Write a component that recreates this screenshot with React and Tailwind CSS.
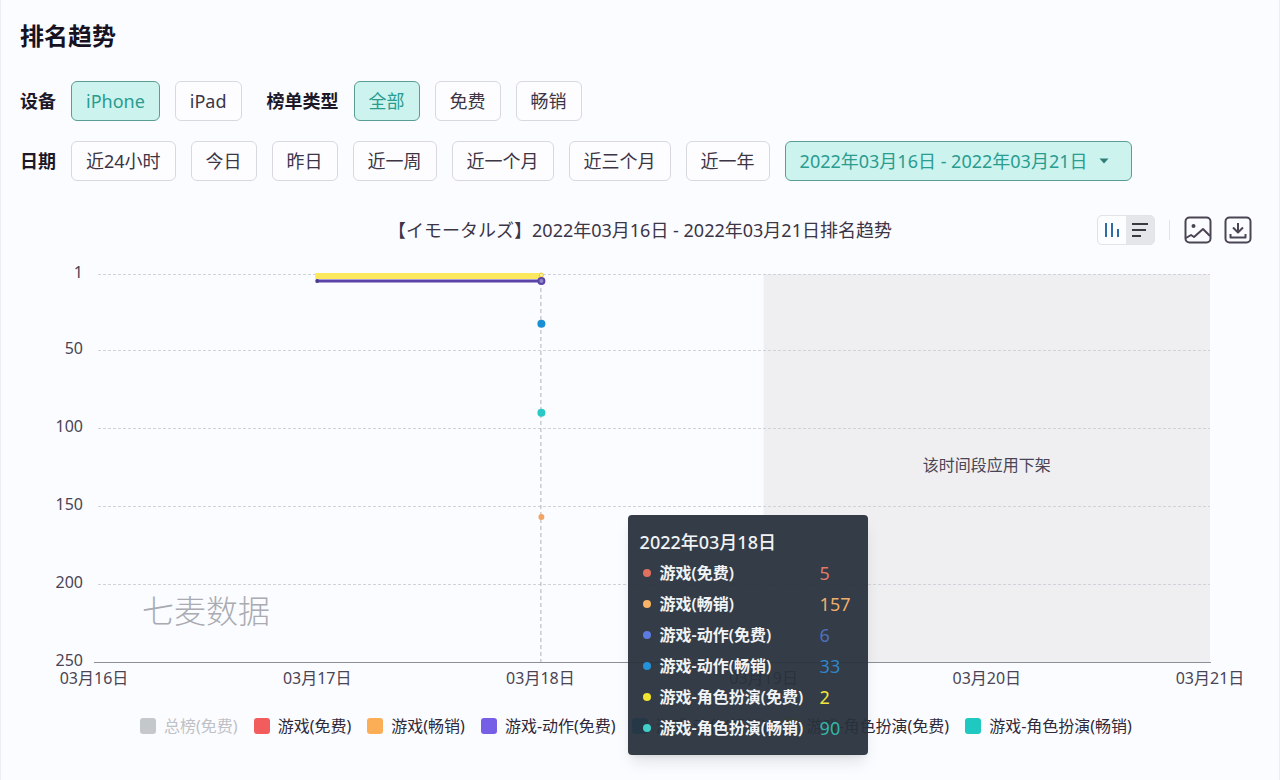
import React, { useState } from 'react';
import clsx from 'clsx';

const devices = ['iPhone', 'iPad'];
const rankTypes = ['全部', '免费', '畅销'];
const ranges = ['近24小时', '今日', '昨日', '近一周', '近一个月', '近三个月', '近一年'];
const dateRange = '2022年03月16日 - 2022年03月21日';

const legend = [
  { name: '总榜(免费)', color: 'bg-[#c4c8cb]', off: true },
  { name: '游戏(免费)', color: 'bg-[#f25c5c]' },
  { name: '游戏(畅销)', color: 'bg-[#fcae57]' },
  { name: '游戏-动作(免费)', color: 'bg-[#775ee6]' },
  { name: '游戏-动作(畅销)', color: 'bg-[#1890e0]' },
  { name: '游戏-角色扮演(免费)', color: 'bg-[#f7e34f]' },
  { name: '游戏-角色扮演(畅销)', color: 'bg-[#1fc9c1]' },
];

const tooltipRows = [
  { name: '游戏(免费)', value: 5, dot: 'bg-[#e0705f]', text: 'text-[#e07a6a]' },
  { name: '游戏(畅销)', value: 157, dot: 'bg-[#f9b266]', text: 'text-[#f0ae6c]' },
  { name: '游戏-动作(免费)', value: 6, dot: 'bg-[#5b7be0]', text: 'text-[#4f70bd]' },
  { name: '游戏-动作(畅销)', value: 33, dot: 'bg-[#2492d8]', text: 'text-[#2f86cb]' },
  { name: '游戏-角色扮演(免费)', value: 2, dot: 'bg-[#f2e32f]', text: 'text-[#f2e63c]' },
  { name: '游戏-角色扮演(畅销)', value: 90, dot: 'bg-[#3fd0c8]', text: 'text-[#35b5a8]' },
];

const yTicks = [1, 50, 100, 150, 200, 250];
const xTicks = ['03月16日', '03月17日', '03月18日', '03月19日', '03月20日', '03月21日'];

// plot area inside the 1240 x 430 chart
const LEFT = 74;
const RIGHT = 1190;
const TOP = 12;
const BOTTOM = 400;

const yOf = (rank) => TOP + ((rank - 1) / 249) * (BOTTOM - TOP);
const xOf = (day) => LEFT + (day / 5) * (RIGHT - LEFT);

function FilterButton({ active, onClick, children }) {
  return (
    <button
      type="button"
      aria-pressed={active}
      onClick={onClick}
      className={clsx(
        'h-10 px-[14px] rounded-md border flex items-center whitespace-nowrap',
        active ? 'bg-[#ccf3ee] border-[#5a9d97] text-[#2a9c90]' : 'bg-[#fdfdff] border-[#d8d9e0] text-[#3c3546]'
      )}
    >
      {children}
    </button>
  );
}

function Chart() {
  return (
    <svg viewBox="0 0 1240 430" className="block w-full" role="img" aria-label="排名趋势">
      <rect x={xOf(3)} y={TOP} width={RIGHT - xOf(3)} height={BOTTOM - TOP} fill="#efeff1" />

      {yTicks.map((t) => (
        <g key={t}>
          {t !== 250 && (
            <line
              x1={LEFT + 4}
              x2={RIGHT}
              y1={Math.round(yOf(t)) + 0.5}
              y2={Math.round(yOf(t)) + 0.5}
              stroke="#d0d2d9"
              strokeDasharray="3 2"
            />
          )}
          <text x="63" y={yOf(t) + 4} textAnchor="end" fontSize="16" fill="#4a4454">
            {t}
          </text>
        </g>
      ))}
      <line x1={LEFT} x2={RIGHT + 1} y1={BOTTOM + 0.5} y2={BOTTOM + 0.5} stroke="#8d9098" />

      {xTicks.map((label, i) => (
        <text key={label} x={xOf(i)} y="422" textAnchor="middle" fontSize="16" fill="#4a4454">
          {label}
        </text>
      ))}

      <text x="122" y="361" fontSize="32" fontWeight="300" fill="#a9abb1">
        七麦数据
      </text>
      <text x={(xOf(3) + RIGHT) / 2} y="209" textAnchor="middle" fontSize="16" fill="#4a4454">
        该时间段应用下架
      </text>

      {/* series */}
      <line x1={xOf(2) + 0.5} x2={xOf(2) + 0.5} y1={TOP} y2={BOTTOM} stroke="#b3b0b8" strokeDasharray="4 3" />
      <line x1={xOf(1) - 2} x2={xOf(2) + 2} y1="14" y2="14" stroke="#fbe85c" strokeWidth="6" />
      <line x1={xOf(1) - 1} x2={xOf(2)} y1="19" y2="19" stroke="#5b43a8" strokeWidth="3" />
      <circle cx={xOf(1)} cy="19" r="2" fill="#4b3a94" />
      <circle cx={xOf(2) + 1} cy="13" r="2" fill="#fdf3a0" stroke="#e8c93a" />
      <circle cx={xOf(2) + 1} cy="19" r="3" fill="#9186c8" stroke="#5b43a8" strokeWidth="2" />
      <circle cx={xOf(2) + 1} cy={yOf(33)} r="4" fill="#1a8fd2" />
      <circle cx={xOf(2) + 1} cy={yOf(90)} r="4" fill="#2cc8c6" />
      <circle cx={xOf(2) + 1} cy={yOf(157)} r="3" fill="#f2a563" />
    </svg>
  );
}

function Tooltip() {
  return (
    <div className="absolute left-[49%] top-[253px] w-60 rounded bg-[#27313b]/94 px-3 pt-3 pb-3 shadow-lg text-[#f1f3f6]">
      <div className="h-[30px] flex items-center text-lg font-medium">2022年03月18日</div>
      <table className="w-full">
        <tbody>
          {tooltipRows.map((row) => (
            <tr key={row.name} className="h-[31px]">
              <td className="w-5 p-0">
                <span className={clsx('block w-2 h-2 ml-[3px] rounded-full', row.dot)}></span>
              </td>
              <td className="p-0 text-base leading-6 font-semibold whitespace-nowrap">{row.name}</td>
              <td className={clsx('w-9 p-0 text-lg leading-6', row.text)}>{row.value}</td>
            </tr>
          ))}
        </tbody>
      </table>
    </div>
  );
}

export default function App() {
  const [device, setDevice] = useState('iPhone');
  const [rankType, setRankType] = useState('全部');
  const [range, setRange] = useState(dateRange);

  return (
    <div className="min-h-screen bg-[#fbfcff] border-x border-[#eceef4] px-[19px] pt-5 pb-5 font-['Noto_Sans','Noto_Sans_CJK_SC',sans-serif] text-lg text-[#3c3546]">
      <h2 className="text-2xl font-bold text-[#16121f]">排名趋势</h2>

      <div className="mt-[29px] flex flex-wrap items-center gap-[15px]">
        <span className="font-bold text-[#1d1828]">设备</span>
        {devices.map((d) => (
          <FilterButton key={d} active={device === d} onClick={() => setDevice(d)}>
            {d}
          </FilterButton>
        ))}
        <span className="ml-[10px] font-bold text-[#1d1828]">榜单类型</span>
        {rankTypes.map((t) => (
          <FilterButton key={t} active={rankType === t} onClick={() => setRankType(t)}>
            {t}
          </FilterButton>
        ))}
      </div>

      <div className="mt-5 flex flex-wrap items-center gap-[15px]">
        <span className="font-bold text-[#1d1828]">日期</span>
        {ranges.map((r) => (
          <FilterButton key={r} active={range === r} onClick={() => setRange(r)}>
            {r}
          </FilterButton>
        ))}
        <FilterButton active={range === dateRange} onClick={() => setRange(dateRange)}>
          <span>{dateRange}</span>
          <svg viewBox="0 0 10 6" className="w-[10px] h-[6px] ml-3 mr-2" fill="#2f7f78">
            <path d="M0.5 0.5h9L5 5.5z" />
          </svg>
        </FilterButton>
      </div>

      <div className="mt-[34px] px-2 grid grid-cols-[1fr_auto_1fr] items-center">
        <h3 className="col-start-2 leading-7">【イモータルズ】{dateRange}排名趋势</h3>
        <div className="flex items-center justify-end">
          <div className="flex rounded-[5px] overflow-hidden border border-[#e1e3e8] bg-[#e4e6ea]">
            <button type="button" aria-label="柱状" className="w-7 h-7 flex items-center justify-center rounded-l bg-[#fbfdff]">
              <svg viewBox="0 0 18 18" className="w-[18px] h-[18px]" stroke="#2f6ca3" strokeWidth="2" fill="none">
                <path d="M3 2v14M9 2v14M15 8v8" />
              </svg>
            </button>
            <button type="button" aria-label="列表" className="w-7 h-7 flex items-center justify-center">
              <svg viewBox="0 0 18 18" className="w-[18px] h-[18px]" stroke="#3a3840" strokeWidth="2" fill="none">
                <path d="M1 3h16M1 9h14M1 15h9" />
              </svg>
            </button>
          </div>
          <span className="w-px h-5 mx-[14px] bg-[#e1e3ea]"></span>
          <button type="button" aria-label="图片">
            <svg viewBox="0 0 28 28" className="w-7 h-7" stroke="#4b4453" strokeWidth="2" fill="none" strokeLinejoin="round">
              <rect x="1.5" y="1.5" width="25" height="25" rx="4" />
              <circle cx="9.5" cy="10" r="2" fill="#4b4453" stroke="none" />
              <path d="M2 22l5-3 3 2 9-8 7 7" />
            </svg>
          </button>
          <button type="button" aria-label="下载" className="ml-3">
            <svg viewBox="0 0 28 28" className="w-7 h-7" stroke="#4b4453" strokeWidth="2" fill="none" strokeLinejoin="round">
              <rect x="1.5" y="1.5" width="25" height="25" rx="4" />
              <path d="M14 7v9M9 11.500l5 5 5-5M6.500 18v3.500h15v-3.500" />
            </svg>
          </button>
        </div>
      </div>

      <div className="relative mt-[17px]">
        <Chart />
        <div className="mt-[22px] pr-2 flex flex-wrap justify-center gap-x-4">
          {legend.map((item) => (
            <button
              key={item.name}
              type="button"
              className={clsx(
                'flex items-center gap-2 text-base leading-6 whitespace-nowrap',
                item.off ? 'text-[#bfc1c6]' : 'text-[#2f2939]'
              )}
            >
              <span className={clsx('w-4 h-4 rounded-[3px]', item.color)}></span>
              {item.name}
            </button>
          ))}
        </div>
        <Tooltip />
      </div>
    </div>
  );
}
